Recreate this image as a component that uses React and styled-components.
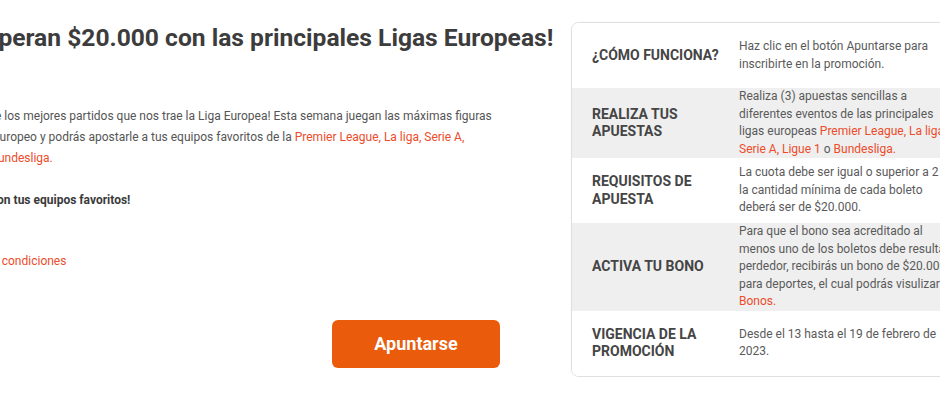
import React from "react";
import styled, { createGlobalStyle } from "styled-components";

const GlobalStyle = createGlobalStyle`
  html, body {
    margin: 0;
    padding: 0;
    background: #ffffff;
    overflow: hidden;
  }
  body {
    font-family: Roboto, "Liberation Sans", Arial, sans-serif;
    color: #555555;
  }
`;

const Page = styled.div`
  display: flex;
  align-items: flex-start;
  gap: 71px;
  width: 1100px;
  margin-left: -60px;
  padding-top: 22px;
`;

const Intro = styled.section`
  display: flex;
  flex-direction: column;
  width: 560px;
  flex-shrink: 0;
`;

const Title = styled.h1`
  margin: 0 0 0 -8px;
  font-size: 24.6px;
  line-height: 32px;
  font-weight: 700;
  color: #3c3c3c;
  white-space: nowrap;
`;

const Text = styled.p`
  max-width: 554px;
  margin: ${(p) => p.$top || 0}px 0 0;
  font-size: 12px;
  line-height: 20.8px;
  font-weight: ${(p) => (p.$bold ? 700 : 400)};
  color: ${(p) => (p.$bold ? "#3a3a3a" : "#555555")};
`;

const Link = styled.a`
  color: #ec4c2a;
  text-decoration: none;
`;

const JoinButton = styled.button`
  align-self: flex-end;
  margin-top: 48px;
  width: 168px;
  height: 48px;
  border: none;
  border-radius: 6px;
  background: #ea5b0c;
  color: #ffffff;
  font-family: Roboto, "Liberation Sans", Arial, sans-serif;
  font-size: 18px;
  font-weight: 700;
  cursor: pointer;
`;

const Card = styled.div`
  box-sizing: border-box;
  flex-shrink: 0;
  width: 405px;
  border: 1px solid #e0e0e0;
  border-radius: 8px;
  overflow: hidden;
  box-shadow: 0 0 2px rgba(0, 0, 0, 0.05);
`;

const Row = styled.div`
  display: grid;
  grid-template-columns: 167px 1fr;
  align-items: center;
  min-height: 65px;
  background: ${(p) => (p.$shaded ? "#efefef" : "#ffffff")};
`;

const Label = styled.div`
  padding: 0 14px 0 20px;
  font-size: 14px;
  line-height: 17.5px;
  font-weight: 700;
  color: #454545;
  text-transform: uppercase;
`;

const Value = styled.div`
  padding-right: 16px;
  font-size: 12px;
  line-height: 17.5px;
  color: #5a5a5a;
`;

const rows = [
  {
    label: "¿Cómo funciona?",
    value: <>Haz clic en el botón Apuntarse para inscribirte en la promoción.</>,
  },
  {
    label: "Realiza tus apuestas",
    shaded: true,
    value: (
      <>
        Realiza (3) apuestas sencillas a diferentes eventos de las principales
        ligas europeas <Link href="#">Premier League, La liga, Serie A, Ligue 1</Link> o{" "}
        <Link href="#">Bundesliga.</Link>
      </>
    ),
  },
  {
    label: "Requisitos de apuesta",
    value: (
      <>
        La cuota debe ser igual o superior a 2 y la cantidad mínima de cada
        boleto deberá ser de $20.000.
      </>
    ),
  },
  {
    label: "Activa tu bono",
    shaded: true,
    value: (
      <>
        Para que el bono sea acreditado al menos uno de los boletos debe
        resultar perdedor, recibirás un bono de $20.000 para deportes, el cual
        podrás visulizar en <Link href="#">Bonos.</Link>
      </>
    ),
  },
  {
    label: "Vigencia de la promoción",
    value: <>Desde el 13 hasta el 19 de febrero de 2023.</>,
  },
];

export default function App() {
  return (
    <>
      <GlobalStyle />
      <Page>
        <Intro>
          <Title>¡Te esperan $20.000 con las principales Ligas Europeas!</Title>
          <Text $top={52}>
            ¡Disfruta de los mejores partidos que nos trae la Liga Europea! Esta
            semana juegan las máximas figuras del fútbol europeo y podrás
            apostarle a tus equipos favoritos de la{" "}
            <Link href="#">Premier League, La liga, Serie A, Ligue 1</Link> y{" "}
            <Link href="#">Bundesliga.</Link>
          </Text>
          <Text $top={22} $bold>
            ¡Apuesta con tus equipos favoritos!
          </Text>
          <Text $top={40}>
            <Link href="#">Términos y condiciones</Link>
          </Text>
          <JoinButton>Apuntarse</JoinButton>
        </Intro>
        <Card>
          {rows.map((r) => (
            <Row key={r.label} $shaded={r.shaded}>
              <Label>{r.label}</Label>
              <Value>{r.value}</Value>
            </Row>
          ))}
        </Card>
      </Page>
    </>
  );
}
